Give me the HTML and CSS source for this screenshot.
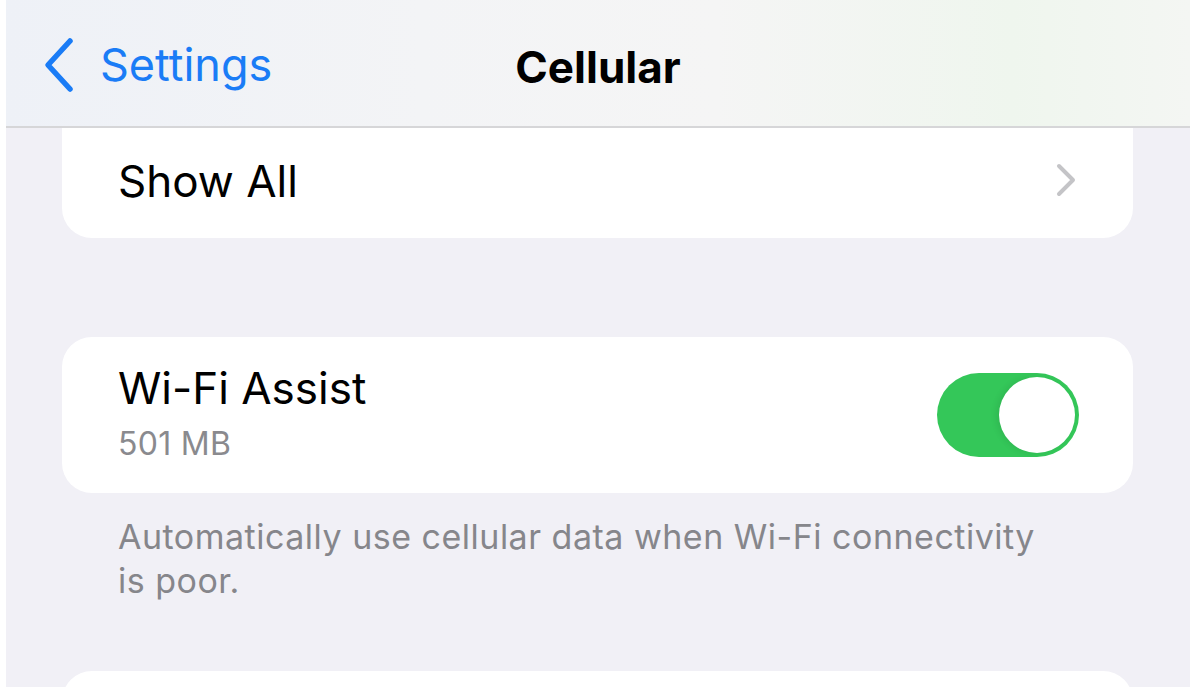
FILE: index.html
```html
<!DOCTYPE html>
<html lang="en">
<head>
  <meta charset="UTF-8">
  <meta name="viewport" content="width=device-width, initial-scale=1.0">
  <title>Cellular</title>
  <link rel="stylesheet" href="styles.css">
</head>
<body>
  <div class="phone">
    <header class="nav-bar">
      <a class="back" href="#">
        <svg class="back-icon" width="34" height="56" viewBox="0 0 34 56">
          <path d="M28 4 L6 28 L28 52" fill="none" stroke="#1a7cf6" stroke-width="5.5" stroke-linecap="round" stroke-linejoin="round"/>
        </svg>
        <span>Settings</span>
      </a>
      <h1 class="title">Cellular</h1>
    </header>

    <div class="content">
      <div class="card card-top">
        <div class="row">
          <span class="row-label">Show All</span>
          <svg class="chevron" width="22" height="36" viewBox="0 0 22 36">
            <path d="M4 4 L18 18 L4 32" fill="none" stroke="#c4c4c7" stroke-width="4" stroke-linecap="round" stroke-linejoin="round"/>
          </svg>
        </div>
      </div>

      <div class="card card-assist">
        <div class="row">
          <div class="row-text">
            <span class="row-label">Wi-Fi Assist</span>
            <span class="row-sub">501 MB</span>
          </div>
          <div class="toggle on">
            <div class="knob"></div>
          </div>
        </div>
      </div>
      <p class="footnote">Automatically use cellular data when Wi-Fi connectivity is poor.</p>

      <div class="card card-next"></div>
    </div>
  </div>
</body>
</html>
```

FILE: styles.css
```css
body {
  margin: 0;
  background-color: #fff;
  font-family: Inter, "Noto Sans", sans-serif;
  height: 687px;
  overflow: hidden;
}

.phone {
  margin: 0 10px 0 6px;
  height: 687px;
  background-color: #f1f0f6;
  overflow: hidden;
}

.nav-bar {
  position: relative;
  height: 126px;
  border-bottom: 2px solid #d6d6d8;
  background: linear-gradient(90deg, #eef1f7 0%, #f3f4f6 35%, #f5f5f5 60%, #eff6ee 85%, #f4f6f3 100%);
  display: flex;
  align-items: center;
}

.back {
  display: flex;
  align-items: center;
  gap: 24px;
  margin-left: 36px;
  margin-top: 4px;
  color: #1a7cf6;
  text-decoration: none;
  font-size: 45px;
}

.back span {
  margin-top: -2px;
}

.title {
  position: absolute;
  left: 0;
  right: 0;
  top: 41px;
  margin: 0;
  text-align: center;
  font-size: 44px;
  font-weight: 700;
  color: #000;
  line-height: 52px;
}

.content {
  padding: 0 57px 0 56px;
}

.card {
  background-color: #fff;
  border-radius: 30px;
}

.card-top {
  height: 110px;
  border-radius: 0 0 30px 30px;
  margin-bottom: 99px;
}

.row {
  display: flex;
  align-items: center;
  justify-content: space-between;
  height: 100%;
  padding: 0 54px 0 56px;
}

.row-label {
  font-size: 44px;
  color: #000;
}

.card-top .row-label {
  margin-top: -4px;
}

.chevron {
  margin-right: 2px;
  margin-top: -6px;
}

.card-assist {
  height: 156px;
}

.row-text {
  display: flex;
  flex-direction: column;
  margin-top: -2px;
}

.row-text .row-label {
  line-height: 52px;
}

.row-sub {
  font-size: 32px;
  letter-spacing: 0.3px;
  color: #8a8a8e;
  line-height: 44px;
  margin-top: 8px;
}

.toggle {
  width: 142px;
  height: 84px;
  border-radius: 42px;
  background-color: #34c759;
  display: flex;
  align-items: center;
  justify-content: flex-end;
  padding: 4px;
  box-sizing: border-box;
}

.knob {
  width: 76px;
  height: 76px;
  border-radius: 50%;
  background-color: #fff;
  box-shadow: -3px 0 6px rgba(0, 0, 0, 0.08);
}

.footnote {
  margin: 22px 76px 0 56px;
  font-size: 34px;
  letter-spacing: 0.5px;
  line-height: 44px;
  color: #86868b;
  height: 156px;
}

.card-next {
  height: 60px;
}
```
